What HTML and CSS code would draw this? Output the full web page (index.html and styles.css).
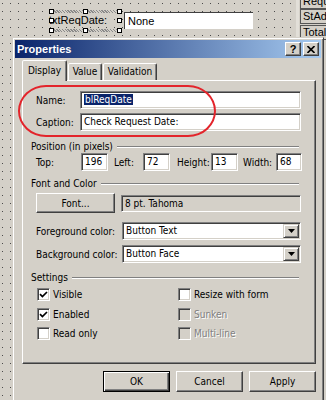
FILE: index.html
```html
<!DOCTYPE html>
<html lang="en">
<head>
    <meta charset="UTF-8">
    <title>Properties</title>
    <link rel="stylesheet" href="styles.css">
</head>
<body>
    <!-- superficie do formulario (designer) -->
    <div class="designer">
        <div class="field-label">
            <span class="hatch hatch-top"></span>
            <span class="hatch hatch-bottom"></span>
            <span class="label-text">txtReqDate:</span>
            <i class="handle" style="left:0;top:0"></i>
            <i class="handle" style="left:34px;top:0"></i>
            <i class="handle" style="left:68px;top:0"></i>
            <i class="handle" style="left:0;top:9px"></i>
            <i class="handle" style="left:68px;top:9px"></i>
            <i class="handle" style="left:0;top:19px"></i>
            <i class="handle" style="left:34px;top:19px"></i>
            <i class="handle" style="left:68px;top:19px"></i>
        </div>
        <div class="field-box">None</div>
        <div class="side-line"></div>
        <div class="side-box side-1">Requ</div>
        <div class="side-box side-2">StAdd</div>
        <div class="side-box side-3">Total</div>
    </div>

    <div class="dialog">
        <div class="titlebar">
            <span class="title">Properties</span>
            <div class="title-buttons">
                <span class="tb-btn help">?</span>
                <span class="tb-btn">
                    <svg width="8" height="7" viewBox="0 0 8 7"><path d="M0.5 0 L7.5 7 M7.5 0 L0.5 7" stroke="#000" stroke-width="1.6"/></svg>
                </span>
            </div>
        </div>

        <div class="client">
            <div class="tabs">
                <div class="tab active">Display</div>
                <div class="tab tab-value">Value</div>
                <div class="tab tab-validation">Validation</div>
            </div>

            <div class="panel">
                <div class="row">
                    <span class="lbl lbl-name">Name:</span>
                    <div class="input"><span class="selected">blReqDate</span></div>
                </div>
                <div class="row row-caption">
                    <span class="lbl lbl-name">Caption:</span>
                    <div class="input">Check Request Date:</div>
                </div>

                <div class="group group-pos"><span>Position (in pixels)</span><i class="rule"></i></div>
                <div class="pos-grid">
                    <span class="lbl">Top:</span>
                    <div class="input">196</div>
                    <span class="lbl pl6">Left:</span>
                    <div class="input">72</div>
                    <span class="lbl pl7">Height:</span>
                    <div class="input">13</div>
                    <span class="lbl pl5">Width:</span>
                    <div class="input">68</div>
                </div>

                <div class="group group-font"><span>Font and Color</span><i class="rule"></i></div>
                <div class="row row-font">
                    <div class="button font-btn">Font...</div>
                    <div class="readonly">8 pt. Tahoma</div>
                </div>
                <div class="row row-fg">
                    <span class="lbl lbl-color">Foreground color:</span>
                    <div class="input select">Button Text<span class="drop"><svg width="7" height="4" viewBox="0 0 7 4"><path d="M0 0 H7 L3.5 4 Z"/></svg></span></div>
                </div>
                <div class="row row-bg">
                    <span class="lbl lbl-color">Background color:</span>
                    <div class="input select">Button Face<span class="drop"><svg width="7" height="4" viewBox="0 0 7 4"><path d="M0 0 H7 L3.5 4 Z"/></svg></span></div>
                </div>

                <div class="group group-settings"><span>Settings</span><i class="rule"></i></div>
                <div class="checks">
                    <label class="check"><span class="box"><svg width="9" height="9" viewBox="0 0 9 9"><path d="M1 4.2 L3.4 6.6 L8 2" fill="none" stroke="#000" stroke-width="1.7"/></svg></span>Visible</label>
                    <label class="check"><span class="box"></span>Resize with form</label>
                    <label class="check"><span class="box"><svg width="9" height="9" viewBox="0 0 9 9"><path d="M1 4.2 L3.4 6.6 L8 2" fill="none" stroke="#000" stroke-width="1.7"/></svg></span>Enabled</label>
                    <label class="check disabled"><span class="box"></span>Sunken</label>
                    <label class="check"><span class="box"></span>Read only</label>
                    <label class="check disabled"><span class="box"></span>Multi-line</label>
                </div>
            </div>

            <div class="actions">
                <div class="button default">OK</div>
                <div class="button">Cancel</div>
                <div class="button">Apply</div>
            </div>
        </div>

        <div class="marker"></div>
    </div>
</body>
</html>
```

FILE: styles.css
```css
body {
    margin: 0;
    width: 326px;
    height: 400px;
    overflow: hidden;
    position: relative;
    font-family: "DejaVu Sans Condensed", "Liberation Sans", sans-serif;
    font-size: 10px;
    color: #000;
    /* grade de pontos do designer */
    background-color: #4a4a4a;
    background-image:
        linear-gradient(to right, transparent 1px, #d4d0c8 1px),
        linear-gradient(to bottom, transparent 1px, #d4d0c8 1px);
    background-size: 8px 8px;
    background-position: 2px 3px;
}

/* ---------- designer ---------- */
.field-label {
    position: absolute;
    left: 49px;
    top: 9px;
    width: 73px;
    height: 24px;
}

.hatch {
    position: absolute;
    left: 4px;
    right: 4px;
    height: 3px;
    background: repeating-linear-gradient(45deg, #8a8a8a 0 1px, #d4d0c8 1px 2px);
}

.hatch-top { top: 1px; }
.hatch-bottom { top: 20px; }

.label-text {
    position: absolute;
    left: 0;
    top: 5px;
    font-family: "Liberation Sans", sans-serif;
    font-size: 11px;
    line-height: 13px;
    background: #d4d0c8;
}

.handle {
    position: absolute;
    width: 3px;
    height: 3px;
    background: #fff;
    border: 1px solid #000;
}

.field-box {
    position: absolute;
    left: 124px;
    top: 12px;
    width: 129px;
    height: 17px;
    box-sizing: border-box;
    background: #fff;
    border-top: 1px solid #404040;
    border-left: 1px solid #404040;
    font-family: "Liberation Sans", sans-serif;
    font-size: 11px;
    line-height: 16px;
    padding-left: 3px;
}

.side-line {
    position: absolute;
    left: 296px;
    top: 0;
    width: 3px;
    height: 40px;
    background: #e2dfd8;
}

.side-box {
    position: absolute;
    left: 300px;
    width: 25px;
    height: 13px;
    overflow: hidden;
    white-space: nowrap;
    border: 1px solid #555;
    border-right: none;
    background: #d4d0c8;
    font-family: "Liberation Sans", sans-serif;
    font-size: 11px;
    line-height: 13px;
    padding-left: 2px;
}

.side-1 { top: -6px; }
.side-2 { top: 9px; }
.side-3 { top: 25px; }

/* ---------- dialog ---------- */
.dialog {
    position: absolute;
    left: 12px;
    top: 37px;
    width: 312px;
    height: 366px;
    box-sizing: border-box;
    background: #d4d0c8;
    border: 1px solid;
    border-color: #d4d0c8 #404040 #404040 #d4d0c8;
    box-shadow: inset 1px 1px #fff, inset -1px -1px #808080;
    padding: 2px;
}

.titlebar {
    height: 18px;
    display: flex;
    align-items: center;
    justify-content: space-between;
    padding: 0 2px 0 2px;
    background: linear-gradient(to right, #0a246a, #a6caf0);
}

.title {
    color: #fff;
    font-family: "Liberation Sans", sans-serif;
    font-weight: bold;
    font-size: 11px;
}

.title-buttons {
    display: flex;
    gap: 2px;
}

.tb-btn {
    width: 14px;
    height: 12px;
    display: flex;
    align-items: center;
    justify-content: center;
    background: #d4d0c8;
    border: 1px solid;
    border-color: #fff #404040 #404040 #fff;
    box-shadow: inset -1px -1px #808080;
}

.help {
    font-family: "Liberation Sans", sans-serif;
    font-weight: bold;
    font-size: 11px;
    line-height: 12px;
}

.client {
    padding: 3px 5px 0 7px;
}

.tabs {
    display: flex;
    align-items: flex-end;
    height: 19px;
}

.tab {
    height: 16px;
    line-height: 16px;
    text-align: center;
    border: 1px solid;
    border-bottom: none;
    border-color: #fff #404040 transparent #fff;
    box-shadow: inset -1px 0 #808080;
    border-radius: 2px 2px 0 0;
    background: #d4d0c8;
}

.tab.active {
    width: 43px;
    height: 20px;
    line-height: 20px;
    margin-bottom: -1px;
    position: relative;
    z-index: 1;
}

.tab-value {
    width: 32px;
    margin-left: 1px;
}

.tab-validation {
    width: 52px;
    margin-left: 1px;
}

.panel {
    height: 284px;
    box-sizing: border-box;
    border: 1px solid;
    border-color: #fff #404040 #404040 #fff;
    box-shadow: inset -1px -1px #808080;
    padding: 10px 8px 0 8px;
    display: flex;
    flex-direction: column;
}

.row {
    display: flex;
    align-items: center;
    height: 18px;
    margin: 0 6px 0 5px;
}

.row-caption { margin-top: 4px; }

.lbl {
    white-space: nowrap;
}

.lbl-name { width: 44px; }
.lbl-color { width: 86px; }

.input {
    flex: 1;
    height: 18px;
    box-sizing: border-box;
    background: #fff;
    border: 1px solid;
    border-color: #808080 #fff #fff #808080;
    box-shadow: inset 1px 1px #404040, inset -1px -1px #d4d0c8;
    padding-left: 3px;
    line-height: 16px;
    white-space: nowrap;
    overflow: hidden;
    position: relative;
}

.selected {
    background: #0a246a;
    color: #fff;
    padding: 0 1px;
}

.group {
    display: flex;
    align-items: center;
    height: 12px;
}

.group-pos { margin-top: 9px; }
.group-font { margin-top: 6px; }
.group-settings { margin-top: 8px; }

.rule {
    flex: 1;
    border-top: 1px solid #808080;
    border-bottom: 1px solid #fff;
    margin: 1px 8px 0 4px;
}

.pos-grid {
    display: grid;
    grid-template-columns: 45px 27px 35px 27px 41px 27px 38px 26px;
    align-items: center;
    margin: 1px 0 0 5px;
    height: 18px;
}

.pl5 { padding-left: 5px; }
.pl6 { padding-left: 6px; }
.pl7 { padding-left: 7px; }

.row-font {
    margin-top: 4px;
    height: 20px;
}

.button {
    height: 21px;
    box-sizing: border-box;
    display: flex;
    align-items: center;
    justify-content: center;
    background: #d4d0c8;
    border: 1px solid;
    border-color: #fff #404040 #404040 #fff;
    box-shadow: inset -1px -1px #808080;
}

.font-btn {
    width: 79px;
    height: 20px;
    margin-right: 6px;
}

.readonly {
    flex: 1;
    height: 17px;
    box-sizing: border-box;
    border: 1px solid;
    border-color: #808080 #fff #fff #808080;
    box-shadow: inset 1px 1px #404040;
    padding-left: 3px;
    line-height: 15px;
}

.row-fg { margin-top: 9px; }
.row-bg { margin-top: 5px; }

.drop {
    position: absolute;
    right: 1px;
    top: 1px;
    width: 14px;
    height: 12px;
    display: flex;
    align-items: center;
    justify-content: center;
    background: #d4d0c8;
    border: 1px solid;
    border-color: #d4d0c8 #404040 #404040 #d4d0c8;
    box-shadow: inset 1px 1px #fff, inset -1px -1px #808080;
}

.checks {
    display: grid;
    grid-template-columns: 141px 1fr;
    row-gap: 6.5px;
    margin: 5px 0 0 6px;
}

.check {
    display: flex;
    align-items: center;
    gap: 3px;
    height: 13px;
}

.box {
    width: 13px;
    height: 13px;
    box-sizing: border-box;
    background: #fff;
    border: 1px solid;
    border-color: #808080 #fff #fff #808080;
    box-shadow: inset 1px 1px #404040, inset -1px -1px #d4d0c8;
    display: flex;
    align-items: center;
    justify-content: center;
}

.check.disabled {
    color: #808080;
    text-shadow: 1px 1px #fff;
}

.check.disabled .box {
    background: #d4d0c8;
}

.actions {
    display: flex;
    justify-content: flex-end;
    gap: 6px;
    margin-top: 7px;
}

.actions .button {
    width: 67px;
}

.button.default {
    border-color: #000;
    box-shadow: inset 1px 1px #fff, inset -1px -1px #404040, inset -2px -2px #808080;
}

/* destaque em vermelho feito a mao */
.marker {
    position: absolute;
    left: 5px;
    top: 47px;
    width: 194px;
    height: 48px;
    border: 2px solid #e3242b;
    border-radius: 28px / 26px;
}
```
